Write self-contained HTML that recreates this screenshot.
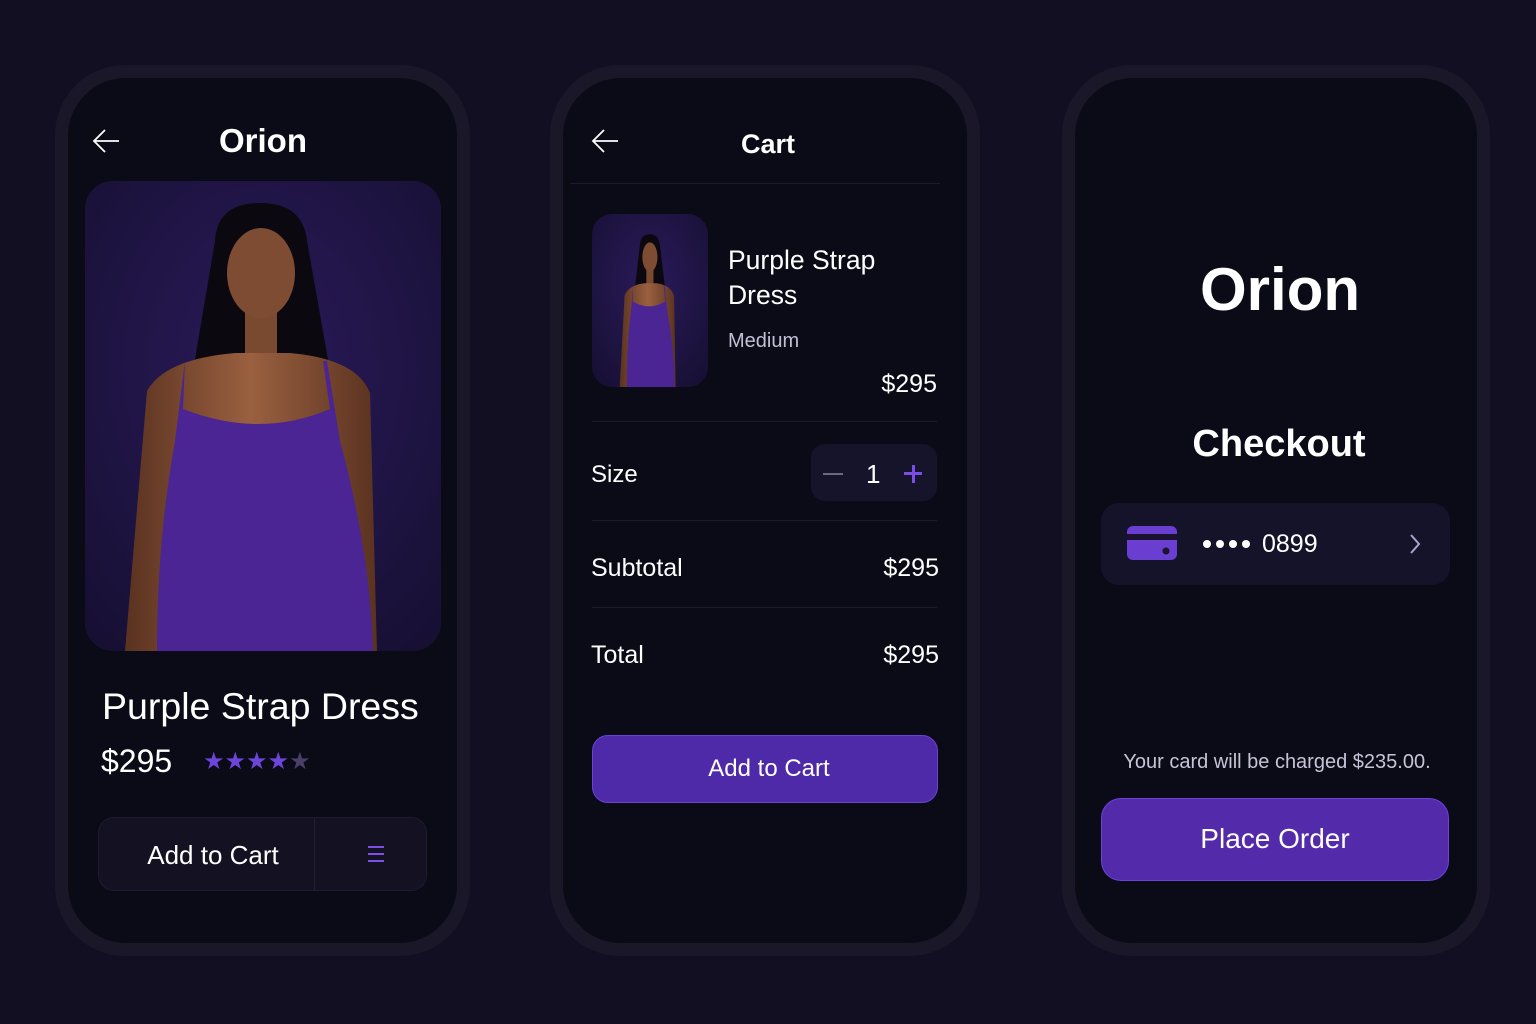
<!DOCTYPE html>
<html><head><meta charset="utf-8"><style>
*{margin:0;padding:0;box-sizing:border-box}
body{width:1536px;height:1024px;background:#110f21;font-family:"Liberation Sans",sans-serif;color:#fff;position:relative;overflow:hidden}
.a{position:absolute}
.ring{position:absolute;border-radius:70px;background:#1a1729}
.scr{position:absolute;border-radius:58px;background:#0b0a17}
.t{position:absolute;white-space:nowrap;line-height:1}
.hr{position:absolute;height:1px;background:#1c1a2c}
</style></head><body>
<div class="ring" style="left:55px;top:65px;width:415px;height:891px"></div>
<div class="scr" style="left:68px;top:78px;width:389px;height:865px"></div>
<div class="ring" style="left:550px;top:65px;width:430px;height:891px"></div>
<div class="scr" style="left:563px;top:78px;width:404px;height:865px"></div>
<div class="ring" style="left:1062px;top:65px;width:428px;height:891px"></div>
<div class="scr" style="left:1075px;top:78px;width:402px;height:865px"></div>

<!-- Phone 1 -->
<svg class="a" style="left:92px;top:128px" width="28" height="26" viewBox="0 0 28 26"><path d="M13 2 L2 13 L13 24 M2 13 H27" fill="none" stroke="#fff" stroke-width="1.8"/></svg>
<div class="t" style="left:163px;width:200px;text-align:center;top:124px;font-size:33px;font-weight:bold">Orion</div>
<svg class="a" style="left:85px;top:181px;border-radius:28px" width="356" height="470" viewBox="0 0 356 470">
<defs><radialGradient id="bg1" cx="0.5" cy="0.4" r="0.8"><stop offset="0" stop-color="#2a1a5a"/><stop offset="1" stop-color="#150f30"/></radialGradient>
<linearGradient id="sk" x1="0" x2="1"><stop offset="0" stop-color="#5a3220"/><stop offset="0.5" stop-color="#9a6040"/><stop offset="1" stop-color="#5a3220"/></linearGradient></defs>
<rect width="356" height="470" fill="url(#bg1)"/>
<path d="M130 60 Q132 22 175 22 Q218 22 222 60 L245 190 L205 175 L145 175 L108 190 Z" fill="#0c0810"/>
<rect x="160" y="115" width="32" height="60" fill="#7a4a30"/>
<path d="M62 210 Q80 178 150 172 L205 172 Q272 178 285 212 L292 470 L40 470 Z" fill="url(#sk)"/>
<path d="M100 180 L98 228 Q175 258 245 228 L238 180 L242 180 L255 260 Q285 370 288 470 L72 470 Q72 360 90 260 Z" fill="#4b2594"/>
<ellipse cx="176" cy="92" rx="34" ry="45" fill="#7e4c32"/>
</svg>
<div class="t" style="left:102px;top:688px;font-size:37.5px">Purple Strap Dress</div>
<div class="t" style="left:101px;top:745px;font-size:32px">$295</div>
<div class="t" style="left:203px;top:750px;font-size:24px;letter-spacing:0px;color:#6d45d8">★★★★<span style="color:#4a3f66">★</span></div>
<div class="a" style="left:98px;top:817px;width:329px;height:74px;border-radius:16px;background:#131122;border:1px solid #1e1b30"></div>
<div class="a" style="left:314px;top:818px;width:1px;height:72px;background:#221f35"></div>
<div class="t" style="left:98px;width:230px;text-align:center;top:842px;font-size:26px">Add to Cart</div>
<div class="a" style="left:368px;top:846px;width:16px;height:2px;background:#7a50e8;box-shadow:0 7px 0 #7a50e8,0 14px 0 #7a50e8"></div>

<!-- Phone 2 -->
<svg class="a" style="left:591px;top:128px" width="28" height="26" viewBox="0 0 28 26"><path d="M13 2 L2 13 L13 24 M2 13 H27" fill="none" stroke="#fff" stroke-width="1.8"/></svg>
<div class="t" style="left:668px;width:200px;text-align:center;top:131px;font-size:27px;font-weight:bold">Cart</div>
<div class="hr" style="left:570px;top:183px;width:370px"></div>
<svg class="a" style="left:592px;top:214px;border-radius:20px" width="116" height="173" viewBox="0 0 356 530" preserveAspectRatio="xMidYMid slice">
<rect x="0" y="0" width="356" height="530" fill="url(#bg1)"/>
<g transform="translate(58,40) scale(0.68 1)">
<path d="M130 60 Q132 22 175 22 Q218 22 222 60 L245 190 L205 175 L145 175 L108 190 Z" fill="#0c0810"/>
<rect x="160" y="115" width="32" height="60" fill="#7a4a30"/>
<path d="M62 210 Q80 178 150 172 L205 172 Q272 178 285 212 L292 490 L40 490 Z" fill="url(#sk)"/>
<path d="M100 180 L98 228 Q175 258 245 228 L238 180 L242 180 L255 260 Q285 370 288 490 L72 490 Q72 360 90 260 Z" fill="#4b2594"/>
<ellipse cx="176" cy="92" rx="34" ry="45" fill="#7e4c32"/>
</g>
</svg>
<div class="t" style="left:728px;top:243px;font-size:26.5px;line-height:35px;white-space:normal;width:200px">Purple Strap<br>Dress</div>
<div class="t" style="left:728px;top:331px;font-size:20px;color:#c4c0d4">Medium</div>
<div class="t" style="left:837px;width:100px;text-align:right;top:372px;font-size:25px">$295</div>
<div class="hr" style="left:592px;top:421px;width:345px"></div>
<div class="t" style="left:591px;top:463px;font-size:24px">Size</div>
<div class="a" style="left:811px;top:444px;width:126px;height:57px;border-radius:14px;background:#16142a"></div>
<div class="a" style="left:823px;top:473px;width:20px;height:2px;background:#6c6880"></div>
<div class="t" style="left:866px;top:461px;font-size:26px">1</div>
<div class="a" style="left:904px;top:472px;width:18px;height:3px;background:#7a4ee6"></div>
<div class="a" style="left:911.5px;top:465px;width:3px;height:18px;background:#7a4ee6"></div>
<div class="hr" style="left:592px;top:520px;width:345px"></div>
<div class="t" style="left:591px;top:556px;font-size:25px">Subtotal</div>
<div class="t" style="left:839px;width:100px;text-align:right;top:556px;font-size:25px">$295</div>
<div class="hr" style="left:592px;top:607px;width:345px"></div>
<div class="t" style="left:591px;top:643px;font-size:25px">Total</div>
<div class="t" style="left:839px;width:100px;text-align:right;top:643px;font-size:25px">$295</div>
<div class="a" style="left:592px;top:735px;width:346px;height:68px;border-radius:16px;background:#4f2aa8;border:1px solid #6a42d4"></div>
<div class="t" style="left:596px;width:346px;text-align:center;top:757px;font-size:24px">Add to Cart</div>

<!-- Phone 3 -->
<div class="t" style="left:1080px;width:400px;text-align:center;top:260px;font-size:60px;font-weight:bold">Orion</div>
<div class="t" style="left:1079px;width:400px;text-align:center;top:425px;font-size:38px;font-weight:bold">Checkout</div>
<div class="a" style="left:1101px;top:503px;width:349px;height:82px;border-radius:18px;background:#15132a"></div>
<svg class="a" style="left:1126px;top:525px" width="52" height="36" viewBox="0 0 52 36"><rect x="1" y="1" width="50" height="34" rx="6" fill="#6a3ed0"/><rect x="1" y="9" width="50" height="6" fill="#1a1230"/><circle cx="40" cy="26" r="3.5" fill="#1a1230"/></svg>
<div class="a" style="left:1203px;top:540px;width:8px;height:8px;border-radius:50%;background:#fff;box-shadow:13px 0 0 #fff,26px 0 0 #fff,39px 0 0 #fff"></div>
<div class="t" style="left:1262px;top:532px;font-size:25px">0899</div>
<svg class="a" style="left:1408px;top:533px" width="14" height="22" viewBox="0 0 14 22"><path d="M3 2 L11 11 L3 20" fill="none" stroke="#a9a4d0" stroke-width="2"/></svg>
<div class="t" style="left:1077px;width:400px;text-align:center;top:752px;font-size:20px;color:#c8c4d6">Your card will be charged $235.00.</div>
<div class="a" style="left:1101px;top:798px;width:348px;height:83px;border-radius:20px;background:#522aaa;border:1px solid #6a44d6"></div>
<div class="t" style="left:1101px;width:348px;text-align:center;top:825px;font-size:28px">Place Order</div>
</body></html>
